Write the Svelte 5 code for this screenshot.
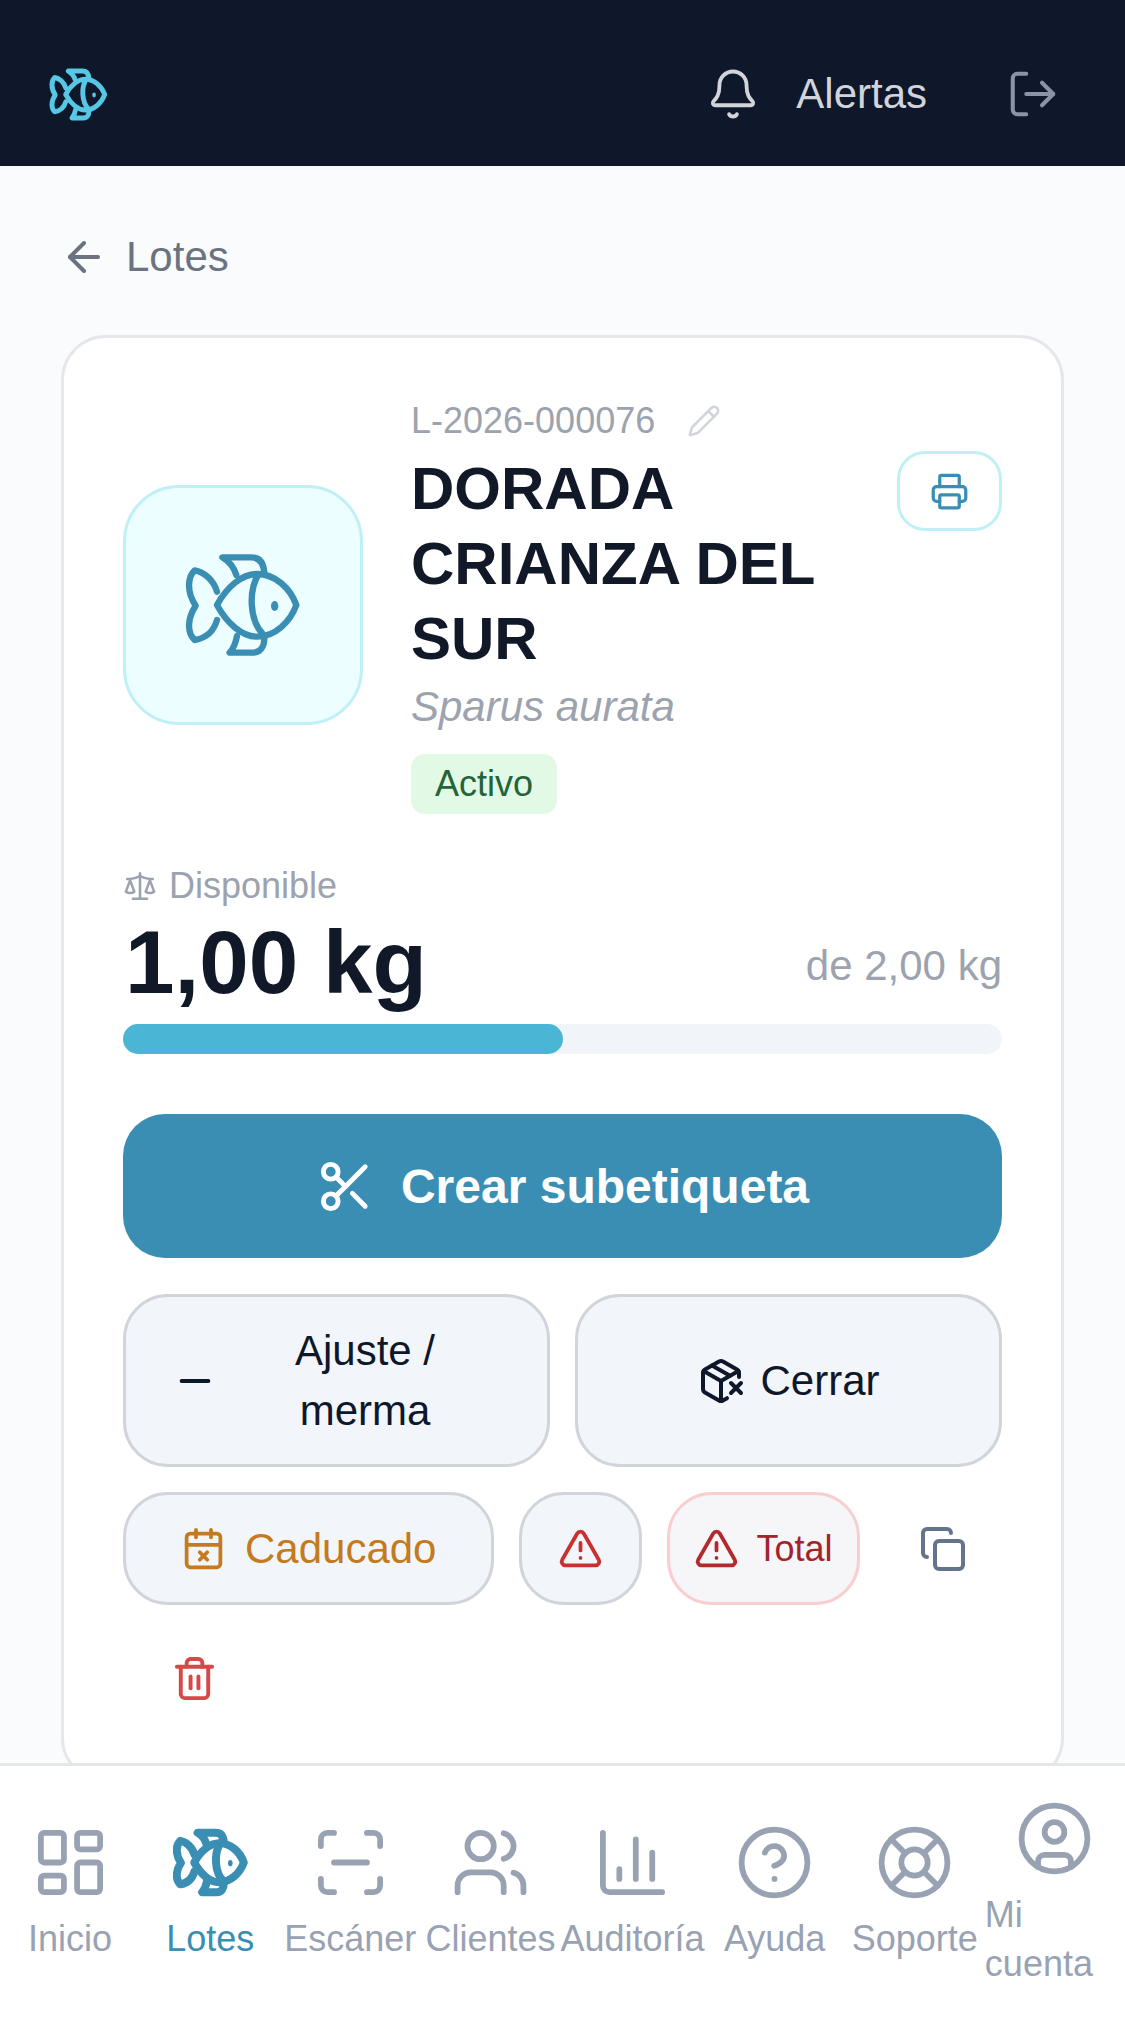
<script>
  const fish = `<path d="M350 645C380 590 425 552 470 552C525 552 570 595 588 645C570 695 525 740 470 740C425 740 380 700 350 645Z"/><path d="M475 552C445 600 445 690 490 735"/><path d="M350 605C340 570 310 545 283 541C262 560 258 605 286 647C258 690 262 730 283 750C315 745 340 725 350 690"/><path d="M408 555C400 530 388 515 366 502L452 502C478 502 490 520 492 548"/><path d="M410 738C406 760 400 775 388 788L458 788C480 788 492 770 492 745"/><ellipse cx="523" cy="648" rx="11" ry="15" fill="currentColor" stroke="none"/>`;

  const navItems = [
    { label: 'Inicio', icon: '<rect width="7" height="9" x="3" y="3" rx="1"/><rect width="7" height="5" x="14" y="3" rx="1"/><rect width="7" height="9" x="14" y="12" rx="1"/><rect width="7" height="5" x="3" y="16" rx="1"/>' },
    { label: 'Lotes', active: true },
    { label: 'Escáner', icon: '<path d="M3 7V5a2 2 0 0 1 2-2h2"/><path d="M17 3h2a2 2 0 0 1 2 2v2"/><path d="M21 17v2a2 2 0 0 1-2 2h-2"/><path d="M7 21H5a2 2 0 0 1-2-2v-2"/><path d="M7 12h10"/>' },
    { label: 'Clientes', icon: '<path d="M16 21v-2a4 4 0 0 0-4-4H6a4 4 0 0 0-4 4v2"/><circle cx="9" cy="7" r="4"/><path d="M22 21v-2a4 4 0 0 0-3-3.87"/><path d="M16 3.13a4 4 0 0 1 0 7.75"/>' },
    { label: 'Auditoría', icon: '<path d="M3 3v16a2 2 0 0 0 2 2h16"/><path d="M18 17V9"/><path d="M13 17V5"/><path d="M8 17v-3"/>' },
    { label: 'Ayuda', icon: '<circle cx="12" cy="12" r="10"/><path d="M9.09 9a3 3 0 0 1 5.83 1c0 2-3 3-3 3"/><path d="M12 17h.01"/>' },
    { label: 'Soporte', icon: '<circle cx="12" cy="12" r="10"/><path d="m4.93 4.93 4.24 4.24"/><path d="m14.83 9.17 4.24-4.24"/><path d="m14.83 14.83 4.24 4.24"/><path d="m9.17 14.83-4.24 4.24"/><circle cx="12" cy="12" r="4"/>' },
    { label: 'Mi cuenta', icon: '<circle cx="12" cy="12" r="10"/><circle cx="12" cy="10" r="3"/><path d="M7 20.662V19a2 2 0 0 1 2-2h6a2 2 0 0 1 2 2v1.662"/>' }
  ];
</script>

<div class="app">
  <header class="topbar">
    <svg class="logo" viewBox="248 465 360 360" fill="none" stroke="currentColor" stroke-width="30" stroke-linecap="round" stroke-linejoin="round">{@html fish}</svg>
    <div class="top-actions">
      <svg class="top-icon bell" viewBox="0 0 24 24" fill="none" stroke="currentColor" stroke-width="1.7" stroke-linecap="round" stroke-linejoin="round"><path d="M10.268 21a2 2 0 0 0 3.464 0"/><path d="M3.262 15.326A1 1 0 0 0 4 17h16a1 1 0 0 0 .74-1.673C19.41 13.956 18 12.499 18 8A6 6 0 0 0 6 8c0 4.499-1.411 5.956-2.738 7.326"/></svg>
      <span class="alerts">Alertas</span>
      <svg class="top-icon logout" viewBox="0 0 24 24" fill="none" stroke="currentColor" stroke-width="1.8" stroke-linecap="round" stroke-linejoin="round"><path d="M9 21H5a2 2 0 0 1-2-2V5a2 2 0 0 1 2-2h4"/><polyline points="16 17 21 12 16 7"/><line x1="21" x2="9" y1="12" y2="12"/></svg>
    </div>
  </header>

  <main class="content">
    <div class="back">
      <svg viewBox="0 0 24 24" fill="none" stroke="currentColor" stroke-width="2" stroke-linecap="round" stroke-linejoin="round"><path d="m12 19-7-7 7-7"/><path d="M19 12H5"/></svg>
      <span>Lotes</span>
    </div>

    <section class="card">
      <div class="hero">
        <div class="hero-icon">
          <svg viewBox="248 465 360 360" fill="none" stroke="currentColor" stroke-width="19" stroke-linecap="round" stroke-linejoin="round">{@html fish}</svg>
        </div>
        <div class="hero-text">
          <div class="code">
            <span>L-2026-000076</span>
            <svg viewBox="0 0 24 24" fill="none" stroke="currentColor" stroke-width="1.8" stroke-linecap="round" stroke-linejoin="round"><path d="M21.174 6.812a1 1 0 0 0-3.986-3.987L3.842 16.174a2 2 0 0 0-.5.83l-1.321 4.352a.5.5 0 0 0 .623.622l4.353-1.32a2 2 0 0 0 .83-.497z"/><path d="m15 5 4 4"/></svg>
          </div>
          <div class="title-row">
            <h1>DORADA CRIANZA DEL SUR</h1>
            <button class="print" aria-label="Imprimir">
              <svg viewBox="0 0 24 24" fill="none" stroke="currentColor" stroke-width="2" stroke-linecap="round" stroke-linejoin="round"><path d="M6 18H4a2 2 0 0 1-2-2v-5a2 2 0 0 1 2-2h16a2 2 0 0 1 2 2v5a2 2 0 0 1-2 2h-2"/><path d="M6 9V3a1 1 0 0 1 1-1h10a1 1 0 0 1 1 1v6"/><rect x="6" y="14" width="12" height="8" rx="1"/></svg>
            </button>
          </div>
          <div class="species">Sparus aurata</div>
          <span class="badge">Activo</span>
        </div>
      </div>

      <div class="avail-label">
        <svg viewBox="0 0 24 24" fill="none" stroke="currentColor" stroke-width="1.8" stroke-linecap="round" stroke-linejoin="round"><path d="m16 16 3-8 3 8c-.87.65-1.92 1-3 1s-2.13-.35-3-1Z"/><path d="m2 16 3-8 3 8c-.87.65-1.92 1-3 1s-2.13-.35-3-1Z"/><path d="M7 21h10"/><path d="M12 3v18"/><path d="M3 7h2c2 0 5-1 7-2 2 1 5 2 7 2h2"/></svg>
        <span>Disponible</span>
      </div>
      <div class="avail-row">
        <span class="amount">1,00 kg</span>
        <span class="total">de 2,00 kg</span>
      </div>
      <div class="bar"><div class="bar-fill" style="width: 50%"></div></div>

      <button class="primary">
        <svg viewBox="0 0 24 24" fill="none" stroke="currentColor" stroke-width="2" stroke-linecap="round" stroke-linejoin="round"><circle cx="6" cy="6" r="3"/><path d="M8.12 8.12 12 12"/><path d="M20 4 8.12 15.88"/><circle cx="6" cy="18" r="3"/><path d="M14.8 14.8 20 20"/></svg>
        <span>Crear subetiqueta</span>
      </button>

      <div class="two-col">
        <button class="btn adjust">
          <svg viewBox="0 0 24 24" fill="none" stroke="currentColor" stroke-width="2" stroke-linecap="round" stroke-linejoin="round"><path d="M5 12h14"/></svg>
          <span>Ajuste / merma</span>
        </button>
        <button class="btn close">
          <svg viewBox="0 0 24 24" fill="none" stroke="currentColor" stroke-width="2" stroke-linecap="round" stroke-linejoin="round"><path d="M21 10V8a2 2 0 0 0-1-1.73l-7-4a2 2 0 0 0-2 0l-7 4A2 2 0 0 0 3 8v8a2 2 0 0 0 1 1.73l7 4a2 2 0 0 0 2 0l2-1.14"/><path d="m7.5 4.27 9 5.15"/><polyline points="3.29 7 12 12 20.71 7"/><line x1="12" x2="12" y1="22" y2="12"/><path d="m17 13 5 5m-5 0 5-5"/></svg>
          <span>Cerrar</span>
        </button>
      </div>

      <div class="small-row">
        <button class="btn small expired">
          <svg viewBox="0 0 24 24" fill="none" stroke="currentColor" stroke-width="2" stroke-linecap="round" stroke-linejoin="round"><path d="M8 2v4"/><path d="M16 2v4"/><rect width="18" height="18" x="3" y="4" rx="2"/><path d="M3 10h18"/><path d="m14 14-4 4"/><path d="m10 14 4 4"/></svg>
          <span>Caducado</span>
        </button>
        <button class="btn small warn" aria-label="Incidencia">
          <svg viewBox="0 0 24 24" fill="none" stroke="currentColor" stroke-width="2" stroke-linecap="round" stroke-linejoin="round"><path d="m21.73 18-8-14a2 2 0 0 0-3.48 0l-8 14A2 2 0 0 0 4 21h16a2 2 0 0 0 1.73-3"/><path d="M12 9v4"/><path d="M12 17h.01"/></svg>
        </button>
        <button class="btn small total-btn">
          <svg viewBox="0 0 24 24" fill="none" stroke="currentColor" stroke-width="2" stroke-linecap="round" stroke-linejoin="round"><path d="m21.73 18-8-14a2 2 0 0 0-3.48 0l-8 14A2 2 0 0 0 4 21h16a2 2 0 0 0 1.73-3"/><path d="M12 9v4"/><path d="M12 17h.01"/></svg>
          <span>Total</span>
        </button>
        <button class="ghost copy" aria-label="Copiar">
          <svg viewBox="0 0 24 24" fill="none" stroke="currentColor" stroke-width="2" stroke-linecap="round" stroke-linejoin="round"><rect width="14" height="14" x="8" y="8" rx="2"/><path d="M4 16c-1.1 0-2-.9-2-2V4c0-1.1.9-2 2-2h10c1.1 0 2 .9 2 2"/></svg>
        </button>
        <button class="ghost trash" aria-label="Eliminar">
          <svg viewBox="0 0 24 24" fill="none" stroke="currentColor" stroke-width="2" stroke-linecap="round" stroke-linejoin="round"><path d="M3 6h18"/><path d="M19 6v14c0 1-1 2-2 2H7c-1 0-2-1-2-2V6"/><path d="M8 6V4c0-1 1-2 2-2h4c1 0 2 1 2 2v2"/><line x1="10" x2="10" y1="11" y2="17"/><line x1="14" x2="14" y1="11" y2="17"/></svg>
        </button>
      </div>
    </section>
  </main>

  <nav class="tabs">
    {#each navItems as item}
      <div class="tab" class:active={item.active}>
        {#if item.active}
          <svg class="tab-fish" viewBox="248 465 360 360" fill="none" stroke="currentColor" stroke-width="38" stroke-linecap="round" stroke-linejoin="round">{@html fish}</svg>
        {:else}
          <svg viewBox="0 0 24 24" fill="none" stroke="currentColor" stroke-width="1.75" stroke-linecap="round" stroke-linejoin="round">{@html item.icon}</svg>
        {/if}
        <span>{item.label}</span>
      </div>
    {/each}
  </nav>
</div>

<style>
  :global(body) {
    margin: 0;
    font-family: "Liberation Sans", Arial, sans-serif;
  }
  svg {
    display: block;
    flex-shrink: 0;
  }
  button {
    font-family: inherit;
    cursor: pointer;
  }
  .app {
    height: 2017px;
    display: flex;
    flex-direction: column;
    overflow: hidden;
    background: #fafbfd;
  }
  .topbar {
    height: 166px;
    box-sizing: border-box;
    flex-shrink: 0;
    display: flex;
    align-items: center;
    justify-content: space-between;
    padding: 22px 65px 0 49px;
    background: #0f172a;
  }
  .logo {
    width: 59px;
    height: 59px;
    color: #56c7e5;
  }
  .top-actions {
    display: flex;
    align-items: center;
  }
  .top-icon {
    width: 54px;
    height: 54px;
  }
  .bell {
    color: #d1d5db;
    margin-right: 36px;
  }
  .alerts {
    font-size: 42px;
    color: #d1d5db;
    margin-right: 79px;
  }
  .logout {
    color: #8b94a5;
  }
  .content {
    flex: 1;
    min-height: 0;
    overflow: hidden;
    padding: 66px 61px 0;
  }
  .back {
    display: flex;
    align-items: center;
    gap: 18px;
    height: 50px;
    margin-bottom: 53px;
    font-size: 42px;
    color: #6b7280;
  }
  .back svg {
    width: 48px;
    height: 48px;
    margin-left: -1px;
  }
  .card {
    background: #fff;
    border: 3px solid #e5e7eb;
    border-radius: 45px;
    padding: 61px 59px 53px;
  }
  .hero {
    display: flex;
    align-items: center;
    gap: 48px;
  }
  .hero-icon {
    width: 240px;
    height: 240px;
    margin-bottom: 3px;
    box-sizing: border-box;
    flex-shrink: 0;
    display: flex;
    align-items: center;
    justify-content: center;
    background: #ecfeff;
    border: 3px solid #bff0f5;
    border-radius: 56px;
    color: #3b8eb3;
  }
  .hero-icon svg {
    width: 120px;
    height: 120px;
  }
  .hero-text {
    flex: 1;
    min-width: 0;
  }
  .code {
    display: flex;
    align-items: center;
    gap: 32px;
    height: 44px;
    font-size: 36px;
    color: #9ca3af;
  }
  .code svg {
    width: 34px;
    height: 34px;
    color: #d1d5db;
  }
  .title-row {
    display: flex;
    justify-content: space-between;
    align-items: flex-start;
    margin-top: 8px;
  }
  h1 {
    margin: 0;
    max-width: 440px;
    font-size: 60px;
    line-height: 75px;
    font-weight: 700;
    color: #111827;
  }
  .print {
    width: 105px;
    height: 80px;
    padding: 0;
    display: flex;
    align-items: center;
    justify-content: center;
    flex-shrink: 0;
    background: #fff;
    border: 3px solid #bff0f5;
    border-radius: 28px;
    color: #3b8eb3;
  }
  .print svg {
    width: 39px;
    height: 39px;
  }
  .species {
    margin-top: 6px;
    font-size: 42px;
    line-height: 50px;
    font-style: italic;
    color: #9ca3af;
  }
  .badge {
    display: inline-block;
    margin-top: 22px;
    padding: 0 24px;
    height: 60px;
    line-height: 60px;
    border-radius: 14px;
    font-size: 36px;
    background: #e2f9e6;
    color: #24643a;
  }
  .avail-label {
    display: flex;
    align-items: center;
    gap: 12px;
    height: 48px;
    margin-top: 48px;
    font-size: 36px;
    color: #9ca3af;
  }
  .avail-label svg {
    width: 34px;
    height: 34px;
  }
  .avail-row {
    display: flex;
    align-items: center;
    justify-content: space-between;
    margin-top: 7px;
  }
  .amount {
    margin-left: 2px;
    font-size: 89px;
    line-height: 90px;
    font-weight: 700;
    color: #111827;
  }
  .total {
    padding-top: 7px;
    font-size: 42px;
    line-height: 50px;
    color: #9ca3af;
  }
  .bar {
    height: 30px;
    margin-top: 17px;
    border-radius: 15px;
    background: #f1f5f9;
  }
  .bar-fill {
    height: 100%;
    border-radius: 15px;
    background: #4ab5d5;
  }
  .primary {
    width: 100%;
    height: 144px;
    margin-top: 60px;
    display: flex;
    align-items: center;
    justify-content: center;
    gap: 26px;
    border: none;
    border-radius: 42px;
    background: #3b8eb3;
    color: #fff;
    font-size: 48px;
    font-weight: 700;
  }
  .primary svg {
    width: 59px;
    height: 59px;
  }
  .two-col {
    display: grid;
    grid-template-columns: 1fr 1fr;
    gap: 25px;
    margin-top: 36px;
  }
  .btn {
    display: flex;
    align-items: center;
    justify-content: center;
    box-sizing: border-box;
    background: #f2f6fa;
    border: 3px solid #d1d5db;
    border-radius: 45px;
    color: #0f172a;
    font-size: 42px;
    line-height: 60px;
  }
  .two-col .btn {
    height: 173px;
  }
  .two-col svg {
    width: 48px;
    height: 48px;
  }
  .adjust {
    gap: 28px;
    padding: 0 63px 0 46px;
  }
  .adjust svg {
    width: 46px;
    height: 46px;
  }
  .adjust span {
    flex: 1;
    text-align: center;
  }
  .close {
    gap: 15px;
  }
  .small-row {
    display: flex;
    flex-wrap: wrap;
    gap: 25px;
    margin-top: 25px;
  }
  .small {
    height: 113px;
  }
  .small svg,
  .ghost svg {
    width: 45px;
    height: 45px;
  }
  .expired {
    gap: 19px;
    padding: 0 55px;
    color: #c47a1e;
  }
  .warn {
    padding: 0 36px;
    color: #c9302f;
  }
  .total-btn {
    gap: 17px;
    padding: 0 24px;
    font-size: 36px;
    color: #a3232a;
    border-color: #f8cfd0;
    background: #f6f5f8;
  }
  .total-btn svg {
    color: #b22a2d;
  }
  .ghost {
    height: 113px;
    display: flex;
    align-items: center;
    justify-content: center;
    background: none;
    border: none;
  }
  .copy {
    padding: 0 34px;
    color: #64748b;
  }
  .copy svg {
    width: 48px;
    height: 48px;
  }
  .trash {
    height: 97px;
    padding: 0 48px;
    color: #d94848;
  }
  .trash svg {
    width: 47px;
    height: 47px;
  }
  .tabs {
    height: 251px;
    flex-shrink: 0;
    display: grid;
    grid-template-columns: repeat(8, 1fr);
    align-items: center;
    background: #fff;
    border-top: 3px solid #e5e7eb;
  }
  .tab {
    display: flex;
    flex-direction: column;
    align-items: center;
    gap: 12px;
    padding-top: 3px;
    font-size: 36px;
    line-height: 49px;
    color: #98a2b3;
  }
  .tab svg {
    width: 79px;
    height: 79px;
  }
  .tab .tab-fish {
    width: 75px;
    height: 79px;
  }
  .tab.active {
    color: #3b8eb3;
  }
</style>
